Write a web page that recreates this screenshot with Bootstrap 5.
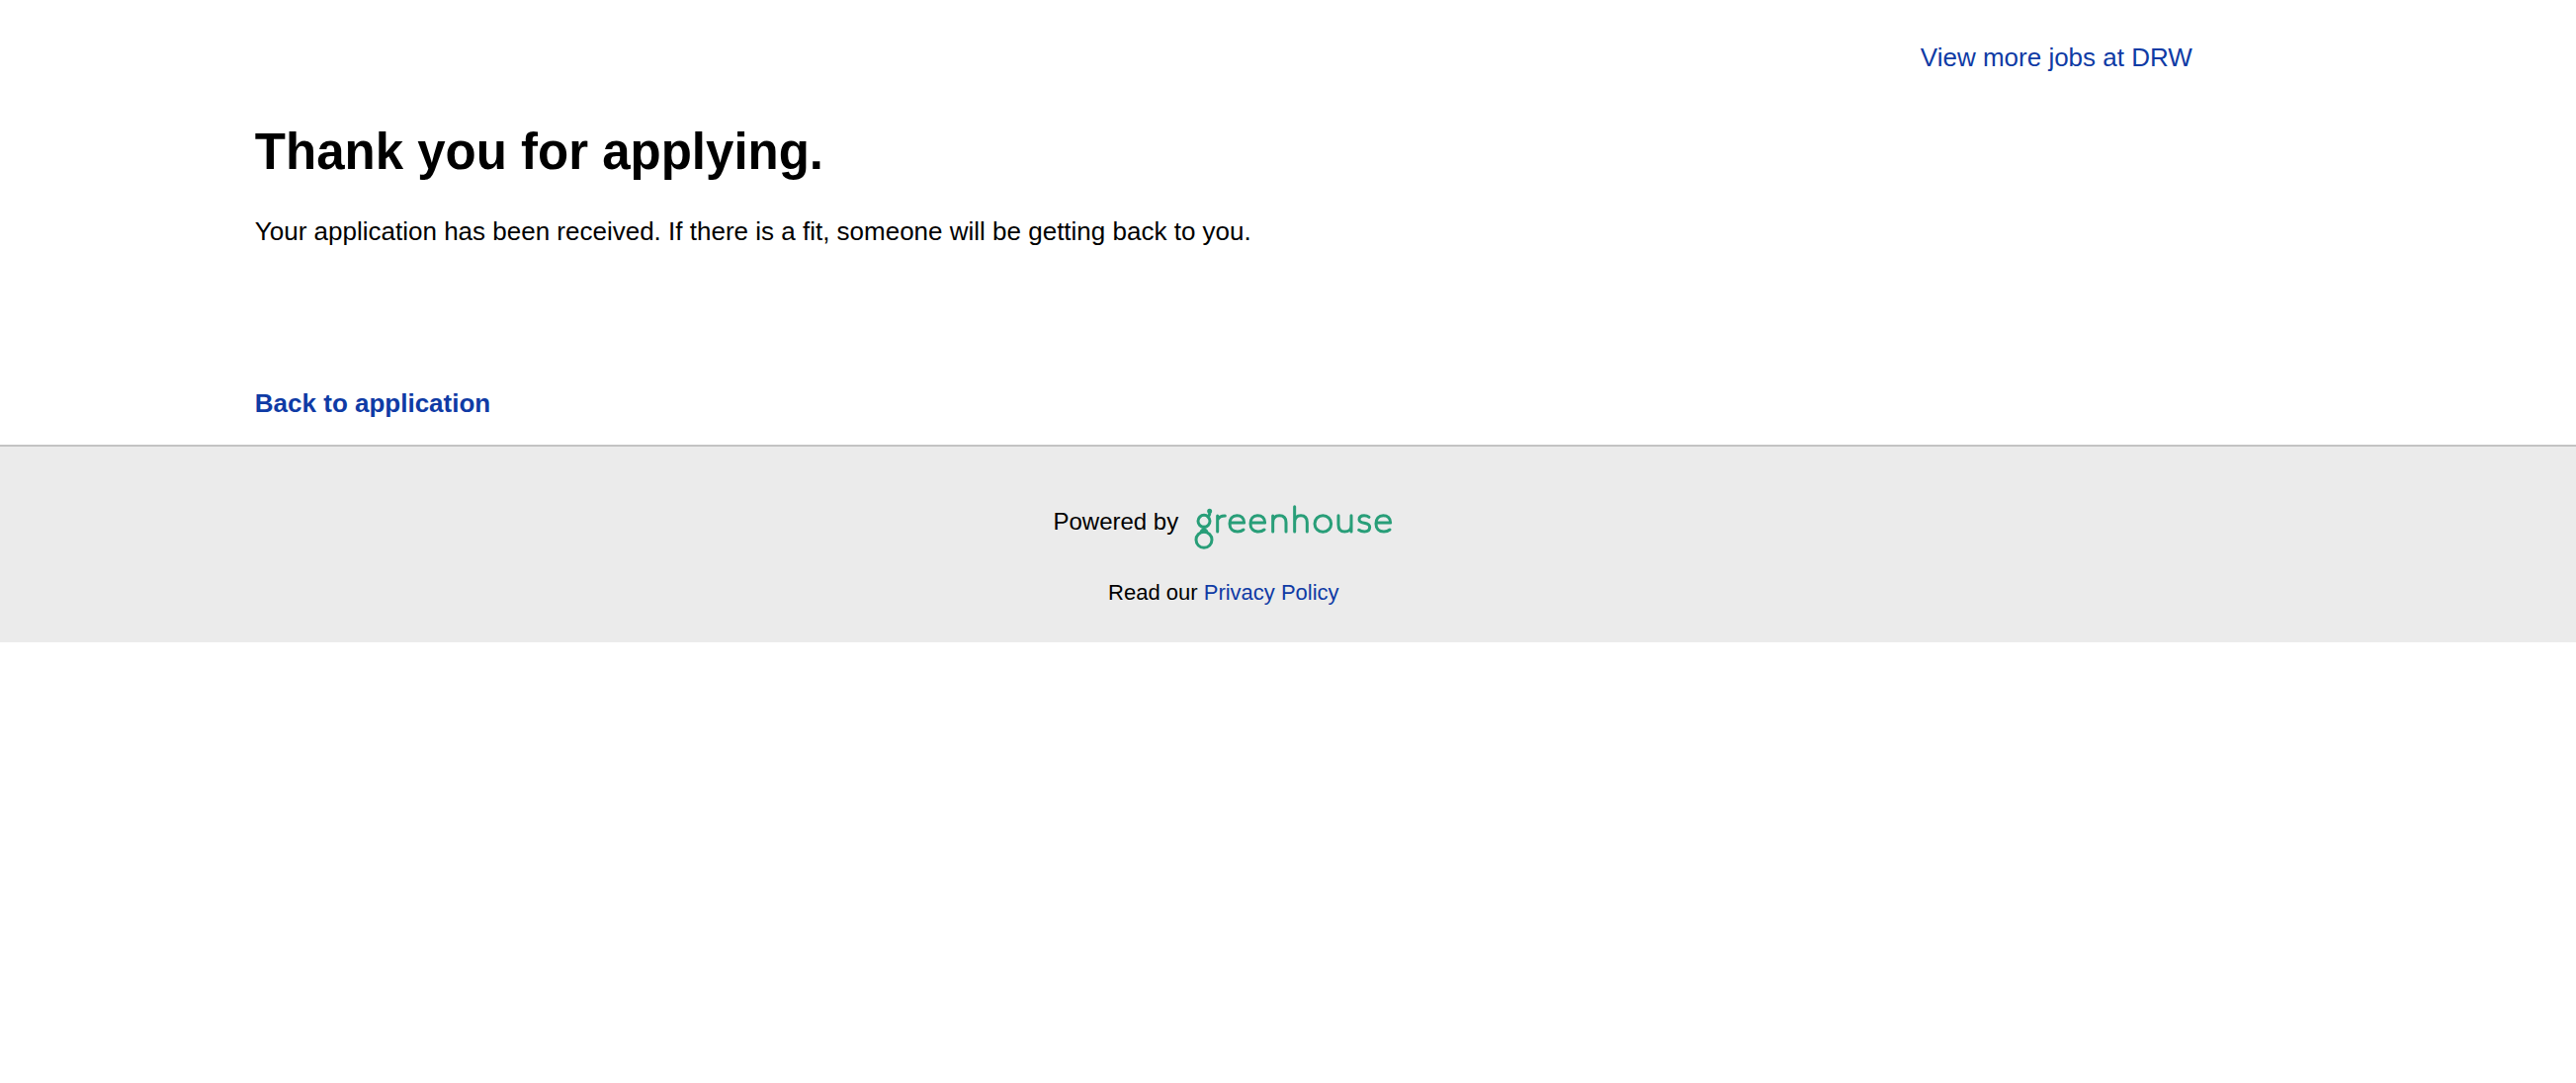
<!DOCTYPE html>
<html lang="en">
<head>
<meta charset="utf-8">
<meta name="viewport" content="width=device-width, initial-scale=1">
<title>Thank you for applying</title>
<link href="https://cdn.jsdelivr.net/npm/bootstrap@5.3.0/dist/css/bootstrap.min.css" rel="stylesheet">
<style>
body { font-family: "Liberation Sans", Arial, sans-serif; font-size: 26px; line-height: 36px; color: #000; background: #fff; }
a { color: #0f3ba5; text-decoration: none; }
a:hover { text-decoration: underline; }
.page-inset { padding-right: 5%; }
.page-content { max-width: 1960px; }
.top-bar { padding-top: 40px; }
.page-title { font-size: 51px; line-height: 64px; font-weight: 700; margin: 46px 0 30px; }
.back-row { padding-top: 138px; padding-bottom: 24px; }
.site-footer { background: #ebebeb; border-top: 2px solid #c3c3c3; padding-top: 58px; padding-bottom: 32px; }
.powered { font-size: 24px; gap: 14px; }
.brand-logo { width: 204px; height: 48px; }
.privacy { font-size: 22px; margin-top: 24px; }
</style>
<script defer src="https://cdn.jsdelivr.net/npm/bootstrap@5.3.0/dist/js/bootstrap.bundle.min.js"></script>
</head>
<body>
<main class="page-inset">
  <div class="page-content mx-auto">
    <div class="top-bar d-flex justify-content-end"><a href="#">View more jobs at DRW</a></div>
    <h1 class="page-title">Thank you for applying.</h1>
    <p class="mb-0">Your application has been received. If there is a fit, someone will be getting back to you.</p>
    <div class="back-row"><a class="fw-bold" href="#">Back to application</a></div>
  </div>
</main>
<footer class="site-footer page-inset">
  <div class="powered d-flex justify-content-center align-items-start">
    <span>Powered by</span>
    <a class="d-flex" href="#" aria-label="Greenhouse">
      <svg class="brand-logo" viewBox="80 62 612 144" fill="none" stroke="#289e78" stroke-width="9" stroke-linecap="round" stroke-linejoin="round" aria-hidden="true">
        <circle cx="116" cy="114" r="18"/>
        <circle cx="116" cy="171" r="24"/>
        <path d="M116 132V146M108 145L116 137L124 145M129 101Q135 94 133 85"/>
        <circle cx="133" cy="84" r="3" fill="#289e78"/>
        <path d="M157 98V146M157 111Q162 98 180 98"/>
        <path d="M195 119H238C238 105 229 97 216 97C202 97 194 107 194 122C194 137 203 146 218 146Q229 146 236 140"/>
        <path d="M258 119H301C301 105 292 97 279 97C265 97 257 107 257 122C257 137 266 146 281 146Q292 146 299 140"/>
        <path d="M325 98V146M325 118C325 104 333 97 345 97C358 97 365 105 365 118V146"/>
        <path d="M391 70V146M391 118C391 104 399 97 410 97C422 97 429 105 429 118V146"/>
        <circle cx="477" cy="122" r="25"/>
        <path d="M524 97V125C524 139 531 146 543 146C555 146 563 139 563 127V97M563 127V146"/>
        <path d="M617 102Q611 97 602 97C592 97 587 102 587 109C587 125 619 114 619 132C619 142 613 146 603 146Q593 146 586 141"/>
        <path d="M639 119H682C682 105 673 97 660 97C646 97 638 107 638 122C638 137 647 146 662 146Q673 146 680 140"/>
      </svg>
    </a>
  </div>
  <p class="privacy text-center mb-0">Read our <a href="#">Privacy Policy</a></p>
</footer>
</body>
</html>
